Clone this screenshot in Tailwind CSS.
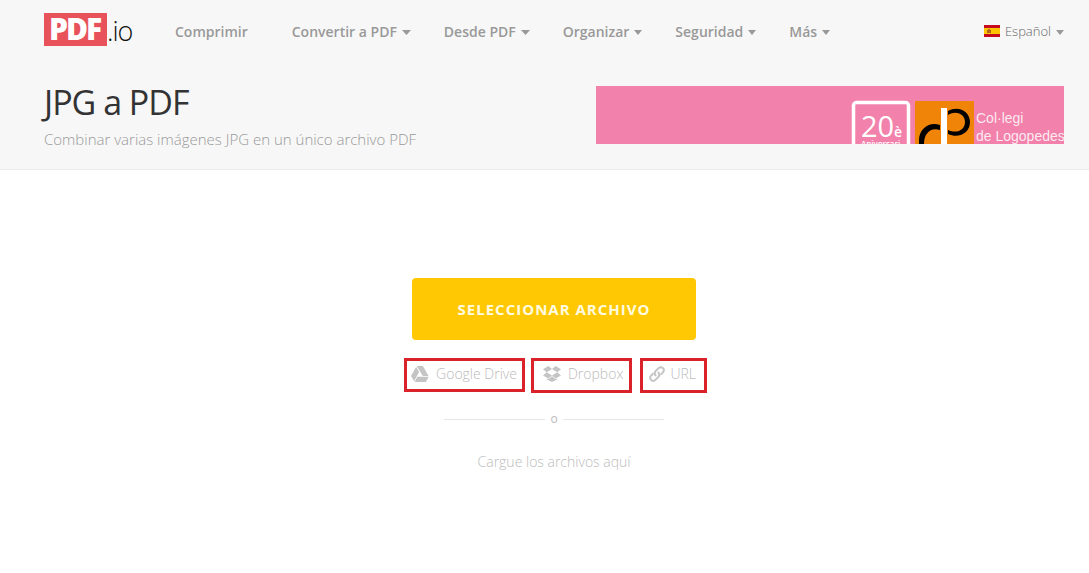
<!DOCTYPE html>
<html lang="es">
<head>
  <meta charset="UTF-8">
  <meta name="viewport" content="width=device-width, initial-scale=1.0">
  <title>JPG a PDF</title>
  <script src="https://cdn.jsdelivr.net/npm/@tailwindcss/browser@4"></script>
</head>
<body class="min-h-screen bg-white font-['Open_Sans',sans-serif]">
  <header class="bg-[#f7f7f7] border-b border-[#ebebeb] pl-11 pr-[25px] pb-5">
    <div class="flex items-center h-16">
      <a href="#" aria-label="PDF.io" class="flex shrink-0 w-[89px] pb-1">
        <svg class="w-[89px] h-[34px] overflow-visible" viewBox="0 0 89 34">
          <rect width="63" height="33" fill="#e8525a"/>
          <text x="5" y="27" font-family="Open Sans" font-weight="800" font-size="30" letter-spacing="-2" fill="#fff">PDF</text>
          <text x="63" y="28" font-family="Open Sans" font-weight="300" font-size="27" letter-spacing="-1" fill="#111">.io</text>
        </svg>
      </a>
      <nav class="flex items-center gap-[33px] ml-[42px] text-sm font-semibold text-[#999]">
        <a href="#" class="mr-[11px]">Comprimir</a>
        <a href="#" class="flex items-center gap-[5px]">Convertir a PDF <svg class="w-[9px] h-[5px]" viewBox="0 0 9 5" fill="currentColor"><path d="M0 0h9L4.500 5z"/></svg></a>
        <a href="#" class="flex items-center gap-[5px]">Desde PDF <svg class="w-[9px] h-[5px]" viewBox="0 0 9 5" fill="currentColor"><path d="M0 0h9L4.500 5z"/></svg></a>
        <a href="#" class="flex items-center gap-[5px]">Organizar <svg class="w-2 h-[5px]" viewBox="0 0 8 5" fill="currentColor"><path d="M0 0h8L4 5z"/></svg></a>
        <a href="#" class="flex items-center gap-[5px]">Seguridad <svg class="w-2 h-[5px]" viewBox="0 0 8 5" fill="currentColor"><path d="M0 0h8L4 5z"/></svg></a>
        <a href="#" class="flex items-center gap-[5px]">Más <svg class="w-2 h-[5px]" viewBox="0 0 8 5" fill="currentColor"><path d="M0 0h8L4 5z"/></svg></a>
      </nav>
      <button type="button" class="flex items-center ml-auto text-[13px] font-light text-[#666]">
        <svg class="w-4 h-3 mr-[5px] mb-[3px]" viewBox="0 0 16 12">
          <rect width="16" height="12" fill="#c60b1e"/>
          <rect width="16" height="6" y="3" fill="#ffc400"/>
          <path d="M3 5h1V4h2v1h1v3H3z" fill="#b5651d"/>
        </svg>
        Español
        <svg class="w-2 h-[5px] ml-[5px] text-[#999]" viewBox="0 0 8 5" fill="currentColor"><path d="M0 0h8L4 5z"/></svg>
      </button>
    </div>

    <div class="flex justify-between items-start pt-[14px]">
      <div>
        <h1 class="text-[34px] leading-12 font-normal tracking-[-1px] text-[#333]">JPG a PDF</h1>
        <p class="mt-[3px] text-[15px] leading-5 font-light text-[#999]">Combinar varias imágenes JPG en un único archivo PDF</p>
      </div>
      <a href="#" aria-label="Col·legi de Logopedes" class="flex justify-end mt-2 w-[468px] bg-[#f282ab]">
        <svg class="w-[468px] h-[58px]" viewBox="0 0 468 58">
          <rect x="257.500" y="16.500" width="55" height="55" rx="3" fill="none" stroke="#fff" stroke-width="3.500"/>
          <text x="265" y="51" font-family="Open Sans" font-size="29" fill="#fff">20</text>
          <text x="298" y="51" font-family="Open Sans" font-size="14" font-weight="600" fill="#fff">è</text>
          <text x="265" y="61" font-family="Open Sans" font-weight="600" font-size="8" fill="#fff">Aniversari</text>
          <rect x="319" y="15" width="59" height="43" fill="#f08408"/>
          <path d="M344 39C333 35 323 43 323 54V58H328C328 48 334 41 344 44z"/>
          <path d="M352 25C363 19 374 26 374 36C374 47 363 53 352 48V44C361 48 369 44 369 36C369 28 360 24 352 29z"/>
          <rect x="345" y="22" width="6" height="36" fill="#fff"/>
          <text x="380" y="37" font-family="Liberation Sans" font-size="14" fill="#fff" fill-opacity=".85">Col·legi</text>
          <text x="380" y="55" font-family="Liberation Sans" font-size="14" fill="#fff" fill-opacity=".85">de Logopedes</text>
        </svg>
      </a>
    </div>
  </header>

  <main class="flex flex-col items-center pl-11 pr-[25px] pt-27 font-light text-[#bbb]">
    <button type="button" class="w-[284px] h-[62px] rounded-[4px] bg-[#ffc803] text-[15px] font-bold tracking-[1px] text-[#fffbe0]">SELECCIONAR ARCHIVO</button>

    <div class="flex items-start mt-[18px] ml-[3px] text-sm">
      <a href="#" class="flex items-center h-[34px] pl-1 pr-[5px] pb-[2px] gap-[7px] border-3 border-[#d9222a]">
        <svg class="w-[18px] h-4" viewBox="0 0 18 16" fill="#c4c4c4">
          <path d="M5.700 0h6.200l5.700 10h-5.800z"/>
          <path d="M5.200.8l2.900 5.100L3.100 15.200 0 10z"/>
          <path d="M6.400 10.800h11.400L14.900 16H3.600z"/>
        </svg>
        Google Drive
      </a>
      <a href="#" class="flex items-center h-[35px] ml-[6px] pl-[9px] pr-[6px] pb-[3px] gap-[7px] border-3 border-[#d9222a]">
        <svg class="w-[18px] h-4" viewBox="0 0 18 16" fill="#c4c4c4">
          <path d="M5.300 0L9 3 3.700 6.300 0 3.300zM12.700 0L18 3.300l-3.700 3L9 3zM0 9.500l3.700-3.200L9 9.500l-3.700 3zM14.300 6.300L18 9.500l-5.300 3L9 9.500zM9 10.300l3.700 3 1.500-.9v1.100L9 16l-5.200-2.500v-1.100l1.500.9z"/>
        </svg>
        Dropbox
      </a>
      <a href="#" class="flex items-center h-[35px] ml-2 pl-[6px] pr-[8px] pb-[3px] gap-[5px] border-3 border-[#d9222a]">
        <svg class="size-4" viewBox="0 0 16 16" fill="none" stroke="#c4c4c4" stroke-width="2" stroke-linecap="round">
          <path d="M6.600 9.400C5.300 8 5.400 6.300 6.600 5.100L9.600 2.100C10.900.8 12.700.8 13.900 2.100C15.200 3.300 15.200 5.100 13.900 6.400L12.200 8.100"/>
          <path d="M9.400 6.600C10.700 8 10.600 9.700 9.400 10.900L6.400 13.900C5.100 15.200 3.300 15.200 2.100 13.900C.8 12.700.8 10.900 2.100 9.600L3.800 7.900"/>
        </svg>
        URL
      </a>
    </div>

    <div class="flex items-center gap-[5px] mt-4 w-[220px] text-xs leading-5">
      <span class="flex-1 h-px bg-[#e6e6e6]"></span>
      <span class="font-normal">o</span>
      <span class="flex-1 h-px bg-[#e6e6e6]"></span>
    </div>
    <p class="mt-[23px] text-sm">Cargue los archivos aquí</p>
  </main>
</body>
</html>
